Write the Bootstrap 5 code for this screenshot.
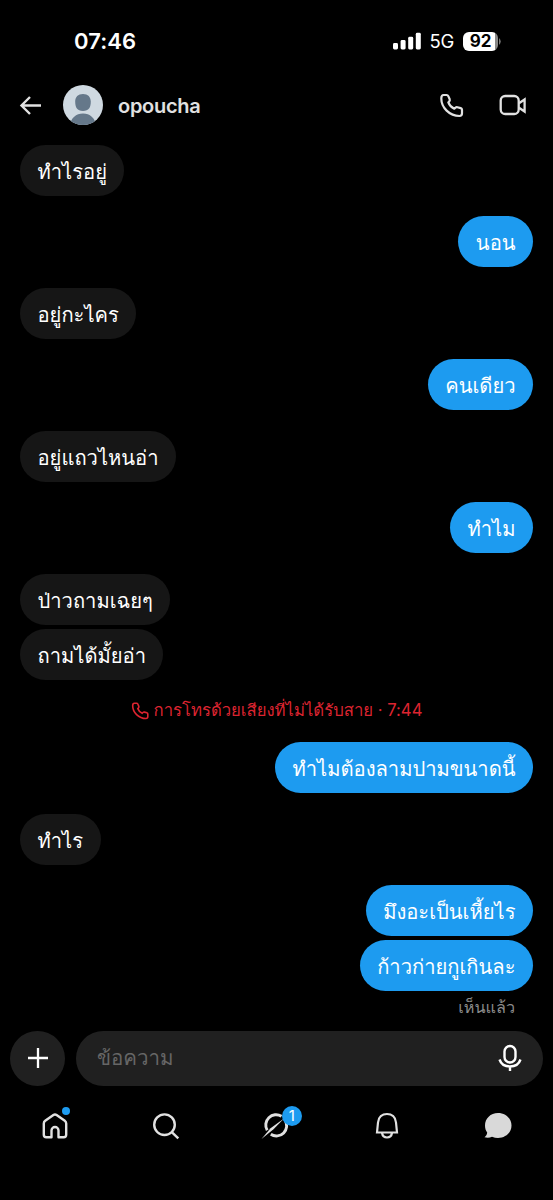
<!DOCTYPE html>
<html lang="th">
<head>
<meta charset="utf-8">
<meta name="viewport" content="width=device-width, initial-scale=1">
<title>opoucha</title>
<link href="https://cdn.jsdelivr.net/npm/bootstrap@5.3.0/dist/css/bootstrap.min.css" rel="stylesheet">
<style>
body{background:#000;color:#fff;font-family:Inter,Loma,Waree,sans-serif;height:1200px;overflow:hidden}
svg{display:block;flex:none}
.status-row{height:65px;padding:17px 52px 0 74px}
.clock{font-size:22px;font-weight:600;line-height:48px;letter-spacing:.1px}
.net{font-size:18.5px;line-height:48px;margin:0 9px 0 9px;letter-spacing:-.3px}
.batt{width:35px;height:19px;border-radius:6px;background:linear-gradient(90deg,#fff 92%,#888 92%);color:#000;font-size:17px;font-weight:700;line-height:19px}
.chat-head{height:79.5px;padding:0 26px 0 19px;color:#e1e1e1}
.who{font-size:20px;font-weight:600;margin-left:15px;line-height:40px;letter-spacing:-.3px;padding-top:2px}
.thread{height:878px;padding:0 20px}
.bubble{height:51px;border-radius:25.5px;padding:0 17.5px;font-size:20.15px;line-height:53px;white-space:nowrap;background:#161616}
.bubble.out{align-self:flex-end;background:#1d9bf0}
.turn{margin-top:20.5px}
.same{margin-top:4px}
.missed{color:#dc2430;font-size:16.7px;height:24px;line-height:24px;margin:18.5px 0 -.5px;white-space:nowrap;letter-spacing:-.01px}
.seen{color:#8b8b8b;font-size:16.2px;line-height:32px;margin-right:18px;height:30px}
.composer{padding:8px 10px 0;gap:11px}
.plus{width:55px;height:55px;background:#202020}
.field{height:55px;background:#202020;color:#666;font-size:20.5px;padding:0 20px 0 21px}
.tabs{height:81px;color:#e1e1e1}
.dot{width:8px;height:8px;background:#1d9bf0;left:61.5px;top:-5.500px}
.count{width:20px;height:20px;background:#1d9bf0;color:#fff;font-size:15px;line-height:20px;left:60.5px;top:-6.500px}
</style>
</head>
<body>
<header>
<div class="status-row d-flex align-items-start">
<span class="clock">07:46</span>
<div class="d-flex align-items-center ms-auto">
<svg width="28" height="18" viewBox="0 0 28 18" fill="#fff"><rect y="11" width="5" height="6.5" rx="1.4"/><rect x="7.6" y="8" width="5" height="9.5" rx="1.4"/><rect x="15.2" y="4.8" width="5" height="12.7" rx="1.4"/><rect x="22.8" y=".8" width="5" height="16.7" rx="1.4"/></svg>
<span class="net">5G</span>
<span class="batt text-center">92</span>
<svg width="3" height="7" viewBox="0 0 3 7"><path d="M1 0Q4.5 3.5 1 7z" fill="#777"/></svg>
</div>
</div>
<div class="chat-head d-flex align-items-center">
<svg width="44" height="40" viewBox="0 0 44 40" fill="none" stroke="currentColor" stroke-width="2.4"><path d="M2 20.5H22M11 12 2.5 20.5 11 29"/></svg>
<svg width="40" height="40" viewBox="0 0 40 40"><defs><clipPath id="face"><circle cx="20" cy="20" r="20"/></clipPath></defs><g clip-path="url(#face)"><path fill="#cfd9e1" d="M0 0h40v40H0z"/><path fill="#65788a" d="M20 9c5 0 7.800 3 7.800 7.500 0 6-2 9.500-7.800 9.500s-7.800-3.500-7.800-9.500C12.200 12 15 9 20 9zM7 40c1-7 6-11.500 13-11.500S32 33 33 40z"/></g></svg>
<span class="who">opoucha</span>
<svg class="ms-auto" width="26" height="26" viewBox="0 0 26 26" fill="none" stroke="currentColor" stroke-width="2.200" stroke-linejoin="round"><g id="phone"><path d="M2.300 6.500Q2.300 3 4.600 3H7.600Q8.800 3 9.300 4.100L10.700 7.300Q11.100 8.500 10.200 9.400L9.300 10.400C10.300 13 12.700 15.600 15.300 16.700L16.400 15.700Q17.300 14.900 18.400 15.200L21.700 16.100Q23 16.500 23 17.800V21.300Q23 24 20.500 24C10.500 24 2.300 15.500 2.300 6.500Z"/></g></svg>
<svg style="margin-left:34px" width="28" height="24" viewBox="0 0 28 24" fill="none" stroke="currentColor" stroke-width="2.300"><rect x="1.700" y="3" width="18" height="18" rx="4.500"/><path d="M20 10.200 25.600 6.500v12L20 14.800"/></svg>
</div>
</header>
<main class="thread d-flex flex-column align-items-start">
<div class="bubble">ทำไรอยู่</div>
<div class="bubble out turn">นอน</div>
<div class="bubble turn">อยู่กะไคร</div>
<div class="bubble out turn">คนเดียว</div>
<div class="bubble turn">อยู่แถวไหนอ่า</div>
<div class="bubble out turn">ทำไม</div>
<div class="bubble turn">ป่าวถามเฉยๆ</div>
<div class="bubble same">ถามได้มั้ยอ่า</div>
<div class="missed d-flex align-items-center align-self-center"><svg class="me-1" width="19" height="19" viewBox="0 0 26 26" fill="none" stroke="currentColor" stroke-width="2.200"><use href="#phone"/></svg><span>การโทรด้วยเสียงที่ไม่ได้รับสาย · 7:44</span></div>
<div class="bubble out turn">ทำไมต้องลามปามขนาดนี้</div>
<div class="bubble turn">ทำไร</div>
<div class="bubble out turn">มึงอะเป็นเหี้ยไร</div>
<div class="bubble out same">ก้าวก่ายกูเกินละ</div>
<div class="seen align-self-end">เห็นแล้ว</div>
</main>
<footer>
<div class="composer d-flex">
<div class="plus rounded-circle d-flex align-items-center justify-content-center"><svg width="22" height="22" viewBox="0 0 22 22" stroke="#fff" stroke-width="2.300"><path d="M11 1v20M1 11h20"/></svg></div>
<div class="field rounded-pill flex-grow-1 d-flex align-items-center justify-content-between"><span>ข้อความ</span><svg width="26" height="28" viewBox="0 0 26 28" fill="none" stroke="#fff" stroke-width="2.400"><rect x="7.500" y="2" width="11" height="16.500" rx="5.500"/><path d="M2.500 15.500C4 20 8 22.500 13 22.500S22 20 23.500 15.500M13 22.500V27"/></svg></div>
</div>
<nav class="tabs row g-0 align-items-center">
<div class="col position-relative"><svg class="mx-auto" width="28" height="28" viewBox="0 0 28 28" fill="none" stroke="currentColor" stroke-width="2.400" stroke-linejoin="round"><path d="M2.800 11.500Q2.800 9.700 4.200 8.700L12.400 3Q14 1.900 15.600 3L23.800 8.700Q25.200 9.700 25.200 11.500V22.700Q25.200 25.200 22.700 25.200H17.500V18.500a3.500 3.500 0 0 0-7 0V25.200H5.300Q2.800 25.200 2.800 22.700Z"/></svg><span class="dot rounded-circle position-absolute"></span></div>
<div class="col"><svg class="mx-auto" width="28" height="28" viewBox="0 0 28 28" fill="none" stroke="currentColor" stroke-width="2.400"><circle cx="12.500" cy="12.700" r="10.300"/><path d="m19.500 19.800 6.800 6.600"/></svg></div>
<div class="col position-relative"><svg class="mx-auto" width="30" height="28" viewBox="0 0 30 28" fill="none" stroke="currentColor" stroke-width="2.900"><path d="M6.200 18.300A10.300 10.300 0 0 1 20.500 4.300M24 8A10.300 10.300 0 0 1 9.800 22.300"/><path d="M.5 27 9.500 16.200 23 6.500 12.500 17.300Z" fill="currentColor" stroke="none"/></svg><span class="count rounded-circle position-absolute text-center">1</span></div>
<div class="col"><svg class="mx-auto" width="28" height="28" viewBox="0 0 28 28" fill="none" stroke="currentColor" stroke-width="2.200"><path d="M4 20.500 5 10.500C5.500 5 9.200 2 14 2s8.500 3 9 8.500l1 10ZM9 21c.5 3 2.300 4.500 5 4.500s4.500-1.500 5-4.500"/></svg></div>
<div class="col"><svg class="mx-auto" width="28" height="28" viewBox="0 0 28 28" fill="#d9d9d9"><path d="M14 1C6.500 1 1 6.500 1 13.500c0 3 .8 5 2.200 7C3 22.500 2 24 .5 25.300c3 .8 5.500.4 7.500-.6 2 .9 4 1.300 6 1.300 7.500 0 13.500-5.500 13.500-12.500S21.500 1 14 1z"/></svg></div>
</nav>
</footer>
<script src="https://cdn.jsdelivr.net/npm/bootstrap@5.3.0/dist/js/bootstrap.bundle.min.js"></script>
</body>
</html>
